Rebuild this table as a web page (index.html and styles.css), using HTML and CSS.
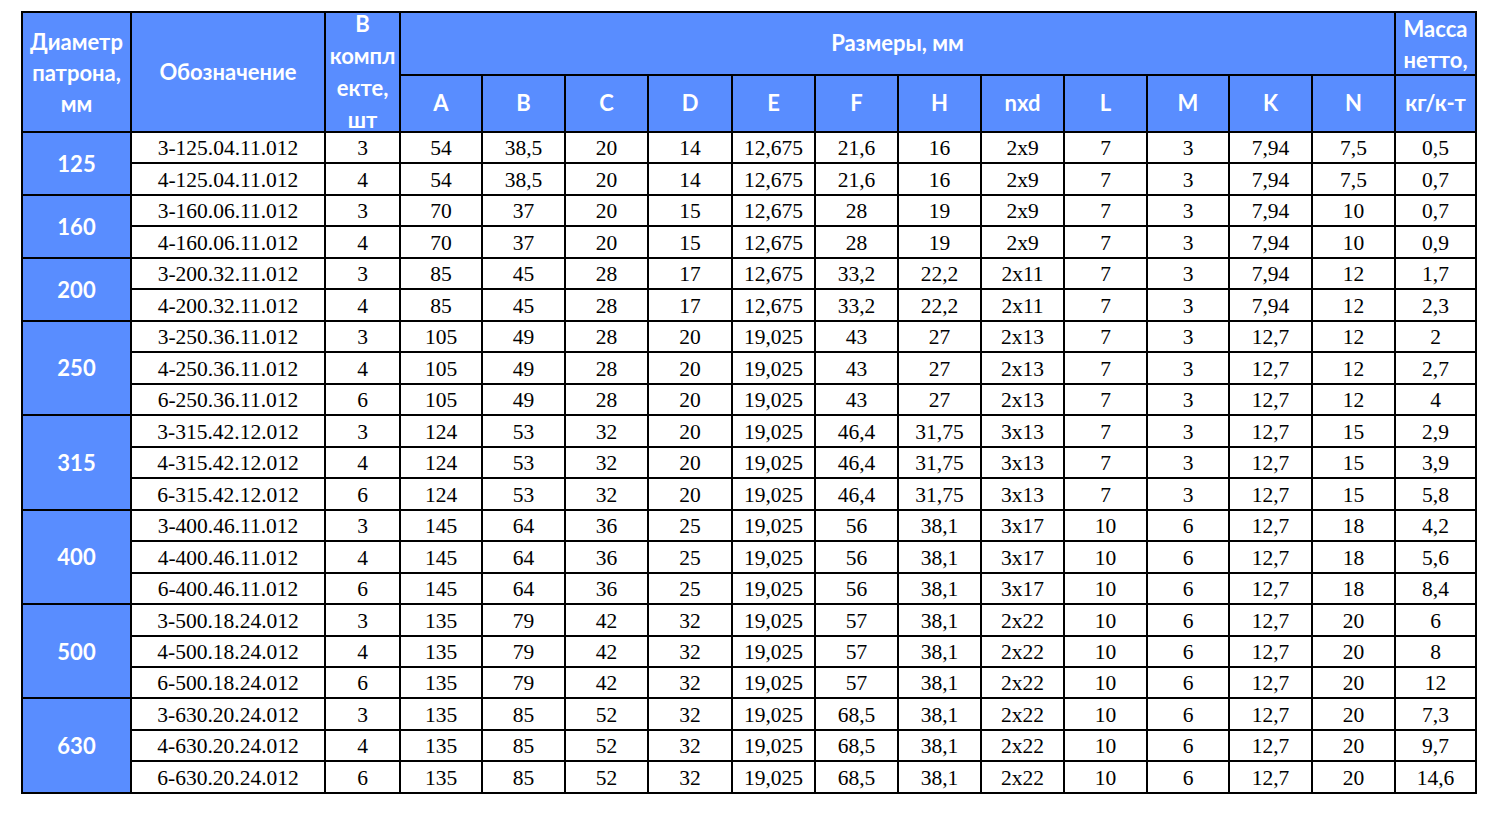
FILE: index.html
```html
<!DOCTYPE html>
<html lang="ru">
<head>
<meta charset="utf-8">
<title>Таблица</title>
<link rel="stylesheet" href="styles.css">
</head>
<body>
<div class="sheet" id="sheet">
  <div class="h span2 lh31">Диаметр<br>патрона,<br>мм</div>
  <div class="h span2">Обозначение</div>
  <div class="h span2 lh32">В<br>компл<br>екте,<br>шт</div>
  <div class="h wide">Размеры, мм</div>
  <div class="h lh31">Масса<br>нетто,</div>
  <div class="h">A</div><div class="h">B</div><div class="h">C</div><div class="h">D</div><div class="h">E</div><div class="h">F</div><div class="h">H</div><div class="h">nxd</div><div class="h">L</div><div class="h">M</div><div class="h">K</div><div class="h">N</div><div class="h">кг/к-т</div>
</div>
<script src="app.js"></script>
</body>
</html>
```
FILE: app.js
```js
const groups = [
  ["125", [
    ["3-125.04.11.012","3","54","38,5","20","14","12,675","21,6","16","2x9","7","3","7,94","7,5","0,5"],
    ["4-125.04.11.012","4","54","38,5","20","14","12,675","21,6","16","2x9","7","3","7,94","7,5","0,7"]]],
  ["160", [
    ["3-160.06.11.012","3","70","37","20","15","12,675","28","19","2x9","7","3","7,94","10","0,7"],
    ["4-160.06.11.012","4","70","37","20","15","12,675","28","19","2x9","7","3","7,94","10","0,9"]]],
  ["200", [
    ["3-200.32.11.012","3","85","45","28","17","12,675","33,2","22,2","2x11","7","3","7,94","12","1,7"],
    ["4-200.32.11.012","4","85","45","28","17","12,675","33,2","22,2","2x11","7","3","7,94","12","2,3"]]],
  ["250", [
    ["3-250.36.11.012","3","105","49","28","20","19,025","43","27","2x13","7","3","12,7","12","2"],
    ["4-250.36.11.012","4","105","49","28","20","19,025","43","27","2x13","7","3","12,7","12","2,7"],
    ["6-250.36.11.012","6","105","49","28","20","19,025","43","27","2x13","7","3","12,7","12","4"]]],
  ["315", [
    ["3-315.42.12.012","3","124","53","32","20","19,025","46,4","31,75","3x13","7","3","12,7","15","2,9"],
    ["4-315.42.12.012","4","124","53","32","20","19,025","46,4","31,75","3x13","7","3","12,7","15","3,9"],
    ["6-315.42.12.012","6","124","53","32","20","19,025","46,4","31,75","3x13","7","3","12,7","15","5,8"]]],
  ["400", [
    ["3-400.46.11.012","3","145","64","36","25","19,025","56","38,1","3x17","10","6","12,7","18","4,2"],
    ["4-400.46.11.012","4","145","64","36","25","19,025","56","38,1","3x17","10","6","12,7","18","5,6"],
    ["6-400.46.11.012","6","145","64","36","25","19,025","56","38,1","3x17","10","6","12,7","18","8,4"]]],
  ["500", [
    ["3-500.18.24.012","3","135","79","42","32","19,025","57","38,1","2x22","10","6","12,7","20","6"],
    ["4-500.18.24.012","4","135","79","42","32","19,025","57","38,1","2x22","10","6","12,7","20","8"],
    ["6-500.18.24.012","6","135","79","42","32","19,025","57","38,1","2x22","10","6","12,7","20","12"]]],
  ["630", [
    ["3-630.20.24.012","3","135","85","52","32","19,025","68,5","38,1","2x22","10","6","12,7","20","7,3"],
    ["4-630.20.24.012","4","135","85","52","32","19,025","68,5","38,1","2x22","10","6","12,7","20","9,7"],
    ["6-630.20.24.012","6","135","85","52","32","19,025","68,5","38,1","2x22","10","6","12,7","20","14,6"]]]
];
const sheet = document.getElementById("sheet");
for (const [d, rows] of groups) {
  const g = document.createElement("div");
  g.className = "h grp rows" + rows.length;
  g.textContent = d;
  sheet.appendChild(g);
  rows.forEach((r) => {
    r.forEach((v) => {
      const c = document.createElement("div");
      c.className = "c";
      c.textContent = v;
      sheet.appendChild(c);
    });
  });
}
```
FILE: styles.css
```css
html, body {
  margin: 0;
  background: #fff;
}
.sheet {
  display: grid;
  grid-template-columns: 107px 192px 73px 80px 81px 81px 82px 81px 81px 81px 81px 81px 80px 81px 81px 79px;
  grid-template-rows: 61px 55px repeat(21, 29.48px);
  gap: 2px;
  padding: 2px;
  background: #000;
  width: max-content;
  margin: 11px 0 0 21px;
}
.h {
  background: #598dff;
  color: #fff;
  font-family: Lato, "Noto Sans", sans-serif;
  font-weight: 700;
  font-size: 22px;
  display: flex;
  align-items: center;
  justify-content: center;
  text-align: center;
  line-height: 1.2;
  overflow: visible;
}
.span2 { grid-row: span 2; }
.wide { grid-column: span 12; }
.lh31 { line-height: 31px; }
.lh32 { line-height: 32px; }
.rows2 { grid-row: span 2; }
.rows3 { grid-row: span 3; }
.grp { padding-top: 1px; }
.c {
  background: #fff;
  color: #000;
  font-family: "Liberation Serif", "Times New Roman", serif;
  font-size: 21.5px;
  display: flex;
  align-items: center;
  justify-content: center;
  line-height: 1;
  padding-top: 3px;
}
```
